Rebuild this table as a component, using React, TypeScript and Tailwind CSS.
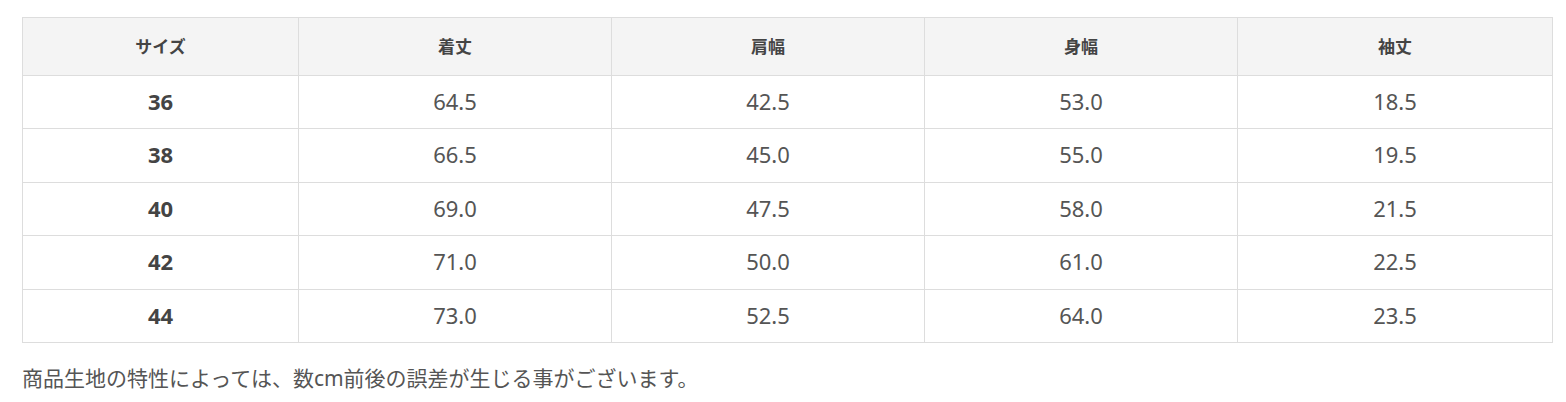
const rows = [
  ['36', '64.5', '42.5', '53.0', '18.5'],
  ['38', '66.5', '45.0', '55.0', '19.5'],
  ['40', '69.0', '47.5', '58.0', '21.5'],
  ['42', '71.0', '50.0', '61.0', '22.5'],
  ['44', '73.0', '52.5', '64.0', '23.5'],
];

const heads = ['サイズ', '着丈', '肩幅', '身幅', '袖丈'];

export default function App() {
  return (
    <div className="bg-white px-[22px] pt-[17px] text-[#555] font-['Noto_Sans','Noto_Sans_CJK_JP',sans-serif]">
      <table className="w-[1530px] border-collapse table-fixed">
        <colgroup>
          <col className="w-[276px]" />
          <col className="w-[313px]" />
          <col className="w-[313px]" />
          <col className="w-[313px]" />
          <col className="w-[315px]" />
        </colgroup>
        <thead>
          <tr className="h-[58px] bg-[#f4f4f4]">
            {heads.map((h) => (
              <th key={h} className="border border-[#ddd] text-[17px] font-bold text-[#444] text-center p-0">
                {h}
              </th>
            ))}
          </tr>
        </thead>
        <tbody>
          {rows.map((r, i) => (
            <tr key={r[0]} className={i % 2 === 1 ? 'h-[54px]' : 'h-[53px]'}>
              {r.map((c, j) => (
                <td
                  key={j}
                  className={`border border-[#ddd] text-center text-[22px] leading-[26px] p-0 pb-[3px] ${j === 0 ? 'font-bold text-[#444]' : ''}`}
                >
                  {c}
                </td>
              ))}
            </tr>
          ))}
        </tbody>
      </table>
      <p className="mt-[21px] text-[21px] leading-[28px]">
        商品生地の特性によっては、数cm前後の誤差が生じる事がございます。
      </p>
    </div>
  );
}
